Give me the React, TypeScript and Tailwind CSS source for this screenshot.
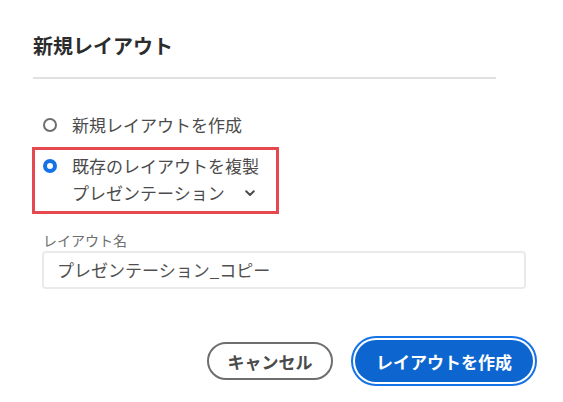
import React from "react";

const font = { fontFamily: '"Noto Sans CJK JP", "Noto Sans", sans-serif' };

function Radio({ checked }: { checked: boolean }) {
  return checked ? (
    <span className="box-border block h-[14px] w-[14px] shrink-0 rounded-full border-[4px] border-[#1473e6] bg-white" />
  ) : (
    <span className="box-border block h-[14px] w-[14px] shrink-0 rounded-full border-2 border-[#6e6e6e] bg-white" />
  );
}

export default function App() {
  return (
    <div
      className="h-[402px] w-[563px] overflow-hidden bg-white pl-[33px] pt-[32px] font-['Noto_Sans_CJK_JP',sans-serif]"
      style={font}
    >
      <h1 className="text-[20px] font-bold leading-[28px] text-[#2c2c2c]">新規レイアウト</h1>
      <div className="mt-[17px] h-[2px] w-[463px] bg-[#e1e1e1]" />

      <div className="mt-[34px] ml-[10px] flex items-center gap-[15px]">
        <Radio checked={false} />
        <span className="text-[17px] leading-[24px] text-[#4b4b4b]">新規レイアウトを作成</span>
      </div>

      <div className="mt-[10px] -ml-px box-border w-[247px] border-[3px] border-[#e6484f] pb-[6px] pl-[8px] pt-[4px]">
        <div className="flex items-center gap-[15px]">
          <Radio checked={true} />
          <span className="text-[17px] leading-[24px] text-[#4b4b4b]">既存のレイアウトを複製</span>
        </div>
        <div className="mt-[3px] flex items-center pl-[29px]">
          <span className="text-[17px] leading-[24px] text-[#4b4b4b]">プレゼンテーション</span>
          <svg className="ml-[20px]" width="10" height="7" viewBox="0 0 10 7" fill="none">
            <path d="M1.2 1.3 L5 5 L8.8 1.3" stroke="#4b4b4b" strokeWidth="2" strokeLinecap="round" strokeLinejoin="round" />
          </svg>
        </div>
      </div>

      <div className="mt-[16px] ml-[10px] text-[14px] leading-[20px] text-[#6e6e6e]">レイアウト名</div>
      <div className="mt-[1px] ml-[9px] box-border flex h-[38px] w-[484px] items-center rounded-[4px] border-2 border-[#eaeaea] pl-[13px] text-[17px] text-[#505050]">
        プレゼンテーション_コピー
      </div>

      <div className="mt-[51px] flex items-center pr-[30px] justify-end">
        <button className="box-border h-[38px] w-[126px] rounded-full border-2 border-[#6e6e6e] bg-white text-[17px] font-bold leading-none text-[#4b4b4b]">
          キャンセル
        </button>
        <button className="ml-[22px] box-border h-[42px] w-[178px] rounded-full bg-[#0d66d0] text-[17px] font-bold leading-none text-white outline-2 outline-offset-2 outline-[#1473e6] outline-solid">
          レイアウトを作成
        </button>
      </div>
    </div>
  );
}
